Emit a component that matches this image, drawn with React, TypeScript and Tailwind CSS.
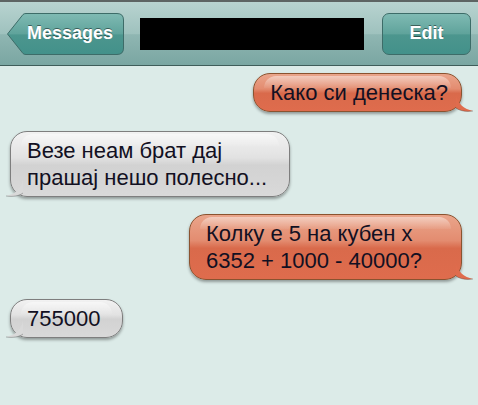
import React from "react";

function Tail({ side, color }: { side: "left" | "right"; color: string }) {
  // little curled tail at the bottom corner of a bubble
  const right = side === "right";
  return (
    <svg
      width="18"
      height="18"
      viewBox="0 0 18 18"
      className={`absolute bottom-[-2px] ${right ? "right-[-13px]" : "left-[-6px] scale-x-[-1]"}`}
    >
      <path d="M0 0 C2 9 8 14 17 16 C10 17 4 16 0 13 Z" fill={color} />
      <path d="M17 16 C10 17 4 16 0 13" fill="none" stroke="rgba(0,0,0,0.25)" strokeWidth="1" />
    </svg>
  );
}

function Bubble({
  side,
  className = "",
  children,
}: {
  side: "left" | "right";
  className?: string;
  children: React.ReactNode;
}) {
  const right = side === "right";
  return (
    <div className={`flex ${right ? "justify-end pr-4" : "justify-start pl-[10px]"}`}>
      <div
        className={`relative rounded-[17px] border pl-4 py-[5px] text-[22px] leading-[27px] text-[#121022] shadow-[0_2px_3px_rgba(0,0,0,0.35)] ${
          right
            ? "pr-[13px] border-[#8a5330] bg-[linear-gradient(to_bottom,#eaa58b_0%,#e38c70_40%,#d96a4b_52%,#df6c4d_100%)]"
            : "pr-[22px] border-[#7e7e7e] bg-[linear-gradient(to_bottom,#f2f2f2_0%,#e2e2e2_40%,#d2d2d2_52%,#d9d9d9_100%)]"
        } ${className}`}
      >
        <div className="pointer-events-none absolute left-[10px] right-[10px] top-[2px] h-[12px] rounded-t-[12px] bg-[linear-gradient(to_bottom,rgba(255,255,255,0.45),rgba(255,255,255,0.05))]" />
        <div className="relative">{children}</div>
        <Tail side={side} color={right ? "#df6c4d" : "#d9d9d9"} />
      </div>
    </div>
  );
}

export default function App() {
  return (
    <div className="w-[478px] h-[405px] overflow-hidden bg-[#dcebe8] font-['Liberation_Sans',Arial,sans-serif]">
      {/* Header */}
      <header className="h-[66px] border-t-2 border-t-[#5d6463] border-b border-b-[#3f5d5a] bg-[linear-gradient(to_bottom,#b8d3d0_0%,#9fc2be_50%,#8fb6b2_52%,#7aa6a2_100%)] flex items-center">
        <div className="relative ml-[7px] w-[117px] h-[42px] flex items-center justify-center">
          <svg width="117" height="42" viewBox="0 0 117 42" className="absolute inset-0">
            <defs>
              <linearGradient id="btn" x1="0" y1="0" x2="0" y2="1">
                <stop offset="0" stopColor="#7fbab3" />
                <stop offset="0.5" stopColor="#5fa39b" />
                <stop offset="0.52" stopColor="#4c968e" />
                <stop offset="1" stopColor="#43918a" />
              </linearGradient>
            </defs>
            <path
              d="M0.5 21 L16 1.5 Q17 0.5 19 0.5 L110 0.5 Q116.5 0.5 116.5 7 L116.5 35 Q116.5 41.5 110 41.5 L19 41.5 Q17 41.5 16 40.5 Z"
              fill="url(#btn)"
              stroke="#3d6c68"
              strokeWidth="1"
            />
          </svg>
          <span className="relative pl-[9px] text-[18px] font-bold text-white [text-shadow:0_-1px_0_rgba(0,0,0,0.45)]">
            Messages
          </span>
        </div>
        <div className="ml-[16px] w-[224px] h-[32px] bg-black" />
        <div className="ml-[18px] w-[89px] h-[42px] rounded-[7px] border border-[#3d6c68] bg-[linear-gradient(to_bottom,#7fbab3_0%,#5fa39b_50%,#4c968e_52%,#43918a_100%)] flex items-center justify-center text-[18px] font-bold text-white [text-shadow:0_-1px_0_rgba(0,0,0,0.45)]">
          Edit
        </div>
      </header>

      {/* Conversation */}
      <div className="flex flex-col pt-[7px]">
        <Bubble side="right">Како си денеска?</Bubble>
        <div className="h-[19px]" />
        <Bubble side="left">
          Везе неам брат дај
          <br />
          прашај нешо полесно...
        </Bubble>
        <div className="h-[17px]" />
        <Bubble side="right" className="w-[273px]">
          Колку е 5 на кубен х
          <br />
          6352 + 1000 - 40000?
        </Bubble>
        <div className="h-[19px]" />
        <Bubble side="left">755000</Bubble>
      </div>
    </div>
  );
}
